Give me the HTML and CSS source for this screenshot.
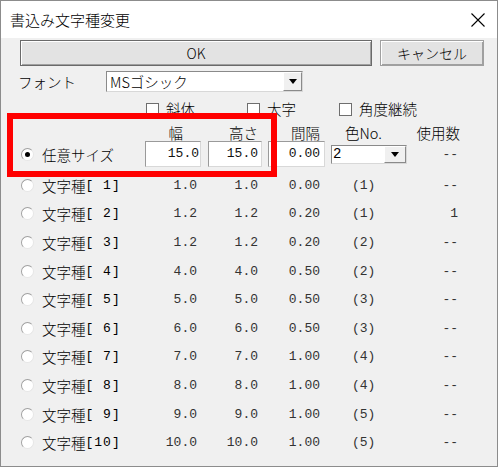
FILE: index.html
```html
<!DOCTYPE html>
<html lang="ja">
<head>
<meta charset="UTF-8">
<title>書込み文字種変更</title>
<link rel="stylesheet" href="styles.css">
</head>
<body>
<div class="window">
  <div class="titlebar">
    <span class="title">書込み文字種変更</span>
    <svg class="close" width="14" height="14" viewBox="0 0 14 14"><path d="M0.5 0.5L13.5 13.5M13.5 0.5L0.5 13.5" stroke="#000" stroke-width="1.1" fill="none"/></svg>
  </div>
  <div class="content">
    <div class="buttons">
      <button class="btn ok">OK</button>
      <button class="btn cancel">キャンセル</button>
    </div>
    <div class="font-row">
      <span class="font-label">フォント</span>
      <div class="combo font-combo"><span class="combo-text">MSゴシック</span><span class="combo-arrow"><i></i></span></div>
    </div>
    <div class="checks">
      <label class="check"><span class="box"></span>斜体</label>
      <label class="check"><span class="box"></span>太字</label>
      <label class="check"><span class="box"></span>角度継続</label>
    </div>
    <div class="row head">
      <span></span>
      <span class="h-w">幅</span>
      <span class="h-h">高さ</span>
      <span class="h-g">間隔</span>
      <span class="h-c">色No.</span>
      <span class="h-u">使用数</span>
    </div>
    <div class="row first">
      <span class="opt"><span class="radio on"></span>任意サイズ</span>
      <span class="field f-w">15.0</span>
      <span class="field f-h">15.0</span>
      <span class="field f-g">0.00</span>
      <div class="combo color-combo"><span class="combo-text">2</span><span class="combo-arrow"><i></i></span></div>
      <span class="num use">--</span>
    </div>
    <div id="rows"></div>
  </div>
  <div class="mark"></div>
</div>
<script>
  const data = [
    [1, '1.0', '1.0', '0.00', 1, '--'],
    [2, '1.2', '1.2', '0.20', 1, '1'],
    [3, '1.2', '1.2', '0.20', 2, '--'],
    [4, '4.0', '4.0', '0.50', 2, '--'],
    [5, '5.0', '5.0', '0.50', 3, '--'],
    [6, '6.0', '6.0', '0.50', 3, '--'],
    [7, '7.0', '7.0', '1.00', 4, '--'],
    [8, '8.0', '8.0', '1.00', 4, '--'],
    [9, '9.0', '9.0', '1.00', 5, '--'],
    [10, '10.0', '10.0', '1.00', 5, '--']
  ]
  const rows = document.getElementById('rows')
  data.forEach(function (d) {
    const row = document.createElement('div')
    row.className = 'row'
    const no = d[0] < 10 ? ' ' + d[0] : '' + d[0]
    row.innerHTML =
      '<span class="opt"><span class="radio"></span>文字種<span class="idx">[' + no + ']</span></span>' +
      '<span class="num c-w">' + d[1] + '</span>' +
      '<span class="num c-h">' + d[2] + '</span>' +
      '<span class="num c-g">' + d[3] + '</span>' +
      '<span class="num c-c">(' + d[4] + ')</span>' +
      '<span class="num use">' + d[5] + '</span>'
    rows.appendChild(row)
  })
</script>
</body>
</html>
```

FILE: styles.css
```css
body {
  margin: 0;
  background: #fff;
  font-family: "Noto Sans CJK JP", sans-serif;
  font-weight: 300;
  color: #000;
}
.window {
  position: relative;
  width: 498px;
  height: 467px;
  box-sizing: border-box;
  border: 1px solid #8c8c8c;
  background: #f0f0f0;
  display: flex;
  flex-direction: column;
}
.titlebar {
  height: 37px;
  background: #fff;
  display: flex;
  align-items: center;
  justify-content: space-between;
  padding: 0 12px 0 9px;
}
.title {
  font-size: 15px;
}
.content {
  padding: 2px 0 0 19px;
  font-size: 14px;
}

.buttons {
  display: flex;
  gap: 8px;
}
.btn {
  height: 26px;
  padding: 0;
  font-family: "Noto Sans CJK JP", sans-serif;
  font-weight: 300;
  font-size: 14px;
  color: #000;
  background: #e3e3e3;
  border: 1px solid #a0a0a0;
  box-shadow: inset 1px 1px #fff, inset -1px -1px #a0a0a0;
}
.ok {
  width: 352px;
  border-color: #6a6a6a;
}
.cancel {
  width: 104px;
}

.font-row {
  display: flex;
  align-items: center;
  margin-top: 5px;
}
.font-label {
  width: 88px;
  margin-left: -2px;
  font-size: 14.5px;
}
.combo {
  display: flex;
  box-sizing: border-box;
  background: #fff;
  border: 1px solid;
  border-color: #8a8a8a #d8d8d8 #d8d8d8 #8a8a8a;
}
.font-combo {
  width: 197px;
  height: 21px;
}
.combo-text {
  flex: 1;
  padding-left: 3px;
  line-height: 19px;
  font-size: 14.5px;
}
.combo-arrow {
  width: 19px;
  box-sizing: border-box;
  background: #f0f0f0;
  border: 1px solid;
  border-color: #fff #8a8a8a #8a8a8a #fff;
  display: flex;
  align-items: center;
  justify-content: center;
}
.combo-arrow i {
  width: 0;
  height: 0;
  border-left: 4.5px solid transparent;
  border-right: 4.5px solid transparent;
  border-top: 5px solid #000;
}

.checks {
  display: grid;
  grid-template-columns: 101px 92px auto;
  margin: 10px 0 0 126px;
  height: 14px;
}
.check {
  display: flex;
  align-items: center;
  gap: 7px;
  line-height: 14px;
  font-size: 14.5px;
}
.box {
  width: 13px;
  height: 13px;
  box-sizing: border-box;
  background: #fff;
  border: 1px solid #6e6e6e;
}

.row {
  display: grid;
  grid-template-columns: 125px 56px 61px 63px 82px 53px;
  align-items: center;
  height: 28.6px;
}
.head {
  margin-top: 8px;
  height: 17px;
  line-height: 17px;
  font-size: 14.5px;
}
.h-w { text-align: right; padding-right: 18px; }
.h-h { text-align: right; padding-right: 4px; }
.h-g { text-align: right; padding-right: 5px; }
.h-c { padding-left: 20px; }
.h-u { text-align: right; }
.first {
  height: 26px;
  margin-bottom: 4px;
}
.opt {
  display: flex;
  align-items: center;
  font-size: 14.5px;
}
.radio {
  width: 13px;
  height: 13px;
  box-sizing: border-box;
  margin: 0 8px 0 1px;
  border-radius: 50%;
  background: #fff;
  border: 1px solid;
  border-color: #a0a0a0 #e6e6e6 #e6e6e6 #a0a0a0;
  display: flex;
  align-items: center;
  justify-content: center;
}
.radio.on::after {
  content: "";
  width: 5px;
  height: 5px;
  border-radius: 50%;
  background: #000;
}
.idx {
  font-family: "Liberation Mono", monospace;
  font-weight: 400;
  font-size: 13px;
  letter-spacing: 1px;
  white-space: pre;
}
.num,
.field {
  font-family: "Liberation Mono", monospace;
  font-weight: 400;
  font-size: 13px;
  color: #333;
  white-space: pre;
}
.field {
  height: 26px;
  box-sizing: border-box;
  line-height: 24px;
  text-align: right;
  background: #fff;
  color: #111;
  border: 1px solid;
  border-color: #9a9a9a #d8d8d8 #d8d8d8 #9a9a9a;
}
.f-w { padding-right: 1px; }
.f-h { width: 54px; justify-self: end; padding-right: 3px; }
.f-g { width: 57px; justify-self: end; padding-right: 4px; }
.color-combo {
  width: 76px;
  height: 19px;
  justify-self: end;
}
.color-combo .combo-text {
  line-height: 17px;
  padding-left: 1px;
  font-family: "Liberation Mono", monospace;
  font-weight: 400;
  font-size: 14px;
}
.color-combo .combo-arrow {
  width: 22px;
}
.c-w { text-align: right; padding-right: 4px; }
.c-h { text-align: right; padding-right: 4px; }
.c-g { text-align: right; padding-right: 5px; }
.c-c { padding-left: 27px; }
.use { text-align: right; padding-right: 2px; }

.mark {
  position: absolute;
  left: 6px;
  top: 112px;
  width: 270px;
  height: 64px;
  box-sizing: border-box;
  border: 6px solid #f00;
}
```
